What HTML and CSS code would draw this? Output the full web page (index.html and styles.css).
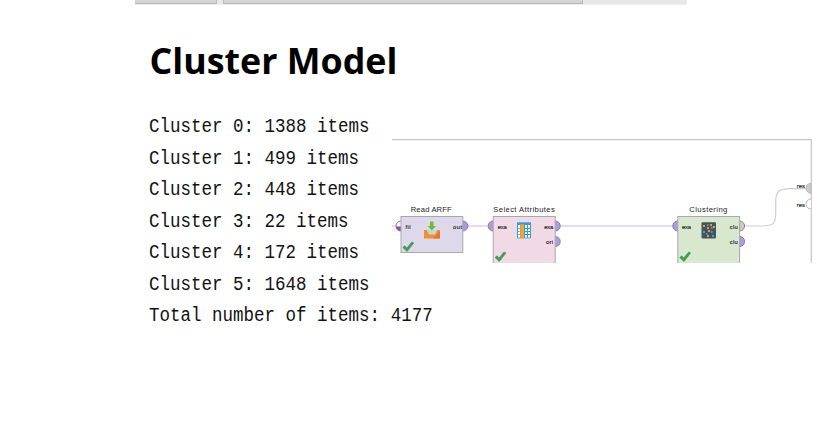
FILE: index.html
```html
<!DOCTYPE html>
<html lang="en">
<head>
<meta charset="utf-8">
<title>Cluster Model</title>
<link rel="stylesheet" href="styles.css">
</head>
<body>
<div class="tabs"><div class="tab first"></div><div class="tab second"></div></div>
<h1>Cluster Model</h1>
<main>
<div class="model">
<p>Cluster 0: 1388 items</p>
<p>Cluster 1: 499 items</p>
<p>Cluster 2: 448 items</p>
<p>Cluster 3: 22 items</p>
<p>Cluster 4: 172 items</p>
<p>Cluster 5: 1648 items</p>
<p>Total number of items: 4177</p>
</div>
<svg class="process" width="431" height="125" viewBox="392 138 431 125">
<defs>
<path id="check" class="check" d="M0 5.5 L2 3.8 L4 6 L9 0 L11 1 L4.3 9.5 Z"/>
</defs>
<path class="frame" d="M392 139.7H811.3V263"/>
<g class="wire">
<path d="M392 226H397M468 226H488M560 226H673"/>
<path class="gray" d="M744 226H761C773 226 775.7 224 775.7 213V202C775.7 191 779 188.6 791 188.6H807"/>
</g>
<g class="port">
<circle class="open" cx="401" cy="226" r="5"/>
<path class="file" d="M396 226.5H401V231C398 231 396 229 396 226.5Z"/>
<circle cx="462.8" cy="226" r="5"/>
<circle cx="493.2" cy="226" r="5"/>
<circle cx="555.2" cy="226" r="5"/>
<circle cx="555.2" cy="241.5" r="5"/>
<circle cx="677.8" cy="226" r="5"/>
<circle class="result" cx="739.6" cy="226" r="5"/>
<circle cx="739.6" cy="241.5" r="5"/>
<path class="sink" d="M811 183.3A5 5 0 0 0 811 193.3Z"/>
<path class="sink-open" d="M811 199A5 5 0 0 0 811 209"/>
</g>
<g class="box">
<rect class="read" x="401" y="216.5" width="61.8" height="36"/>
<rect class="select" x="493.2" y="216.5" width="62" height="50"/>
<rect class="cluster" x="677.8" y="216.5" width="61.8" height="50"/>
</g>
<g class="title">
<text x="410.7" y="211.7" textLength="41">Read ARFF</text>
<text x="493.3" y="211.7" textLength="61.5">Select Attributes</text>
<text x="689.3" y="211.7" textLength="38">Clustering</text>
</g>
<g class="label">
<text x="405.5" y="228.7" textLength="5">fil</text>
<text x="453" y="228.7" textLength="9">out</text>
<text x="497.7" y="228.7" textLength="9">exa</text>
<text x="544.3" y="228.7" textLength="9">exa</text>
<text x="546" y="244.3" textLength="7">ori</text>
<text x="682" y="228.7" textLength="9">exa</text>
<text x="729.8" y="228.7" textLength="8">clu</text>
<text x="729.8" y="244.3" textLength="8">clu</text>
<text x="796.8" y="188.2" textLength="8">res</text>
<text x="796.8" y="206.8" textLength="8">res</text>
</g>
<g>
<path fill="#f0912c" d="M424 230H427L429 234H435L437 230H440V238.5H424Z"/>
<path fill="#e5752a" d="M440 231V238.5H433Z"/>
<path fill="#b9d9e4" d="M427 230H437L435 234.5H429Z"/>
<path fill="#70bd2b" d="M430 221.5H433.5V226H436L431.8 230.5L427.5 226H430Z"/>
</g>
<g>
<rect x="517" y="222.3" width="14" height="16" fill="#329fd0"/>
<path fill="#fff" d="M518 225h2v12.5h-2zM525 225h2v3h-2zM528 225h2v3h-2zM525 229h2v2h-2zM528 229h2v2h-2zM525 232h2v2h-2zM528 232h2v2h-2zM525 235h2v2.5h-2zM528 235h2v2.5h-2z"/>
<path stroke="#329fd0" stroke-width=".7" d="M518 228.5h2M518 231.5h2M518 234.5h2"/>
<rect x="520.3" y="224.3" width="3.7" height="14" fill="#f7a437"/>
</g>
<g>
<rect x="701.5" y="222.3" width="14.5" height="16.2" rx="1" fill="#435461"/>
<path fill="#f19a27" d="M703 225h2v2h-2zM710 224h2v2h-2zM713 226h2v2h-2zM707 227h2v2h-2zM708 230h2v2h-2zM707 235h2v2h-2z"/>
<path fill="#38a3df" d="M707 224h1.5v2h-1.5zM711 227h1.5v2h-1.5zM703 231h2v2h-2zM706 233h1.5v1.5h-1.5zM712 235h2v2h-2zM711 231h1.5v2h-1.5z"/>
</g>
<use href="#check" x="402.8" y="242"/>
<use href="#check" x="495" y="252"/>
<use href="#check" x="679.7" y="252"/>
</svg>
</main>
</body>
</html>
```
FILE: styles.css
```css
body {
  margin: 0;
  background: #fff;
  color: #000;
  height: 434px;
  overflow: hidden;
}
.tabs {
  display: flex;
  gap: 6px;
  width: 552px;
  height: 4px;
  margin-left: 135px;
  background: #e8e8e8;
  border-bottom: 1px solid #eee;
}
.tab {
  box-sizing: border-box;
  background: #d4d4d4;
  border: solid #b9b9b9;
  border-width: 0 1px 1px 0;
}
.first { width: 82px; }
.second { width: 360px; border-left-width: 1px; }
h1 {
  margin: 33px 0 0 149.5px;
  height: 44px;
  font: 700 35.8px/44px "Open Sans", sans-serif;
  white-space: nowrap;
}
main {
  display: flex;
  margin: 29px 0 0 148.5px;
}
.model {
  width: 243.5px;
  flex: none;
}
.model p {
  margin: 0;
  width: max-content;
  font: 20.5px/31.55px "Liberation Mono", monospace;
  color: #111;
  transform: scaleX(.854);
  transform-origin: 0 0;
  white-space: pre;
}
.process {
  flex: none;
  margin-top: 27px;
}
.frame { fill: none; stroke: #c5c5c5; stroke-width: 1.2; }
.wire { fill: none; stroke: #c4bde8; stroke-width: 1.2; }
.wire .gray { stroke: #cecece; }
.port { fill: #ad9be0; stroke: #85819a; stroke-width: 1; }
.port .open { fill: #fff; }
.port .file { fill: #9a43ba; stroke: none; }
.port .result { fill: #c8c8c8; stroke: #8c8c8c; }
.port .sink { fill: #ccc; stroke: #bbb; }
.port .sink-open { fill: #fff; stroke: #bbb; }
.box { stroke: #aaa6ae; stroke-width: 1; }
.read { fill: #ded9ea; }
.select { fill: #f1d9e6; }
.cluster { fill: #d8e8cf; }
.title { font: 7.6px "Liberation Sans", sans-serif; fill: #222; }
.label { font: 5.8px "Liberation Sans", sans-serif; fill: #222; stroke: #222; stroke-width: .15; }
.check { fill: #42a052; stroke: #2f8344; stroke-width: .5; }
```
